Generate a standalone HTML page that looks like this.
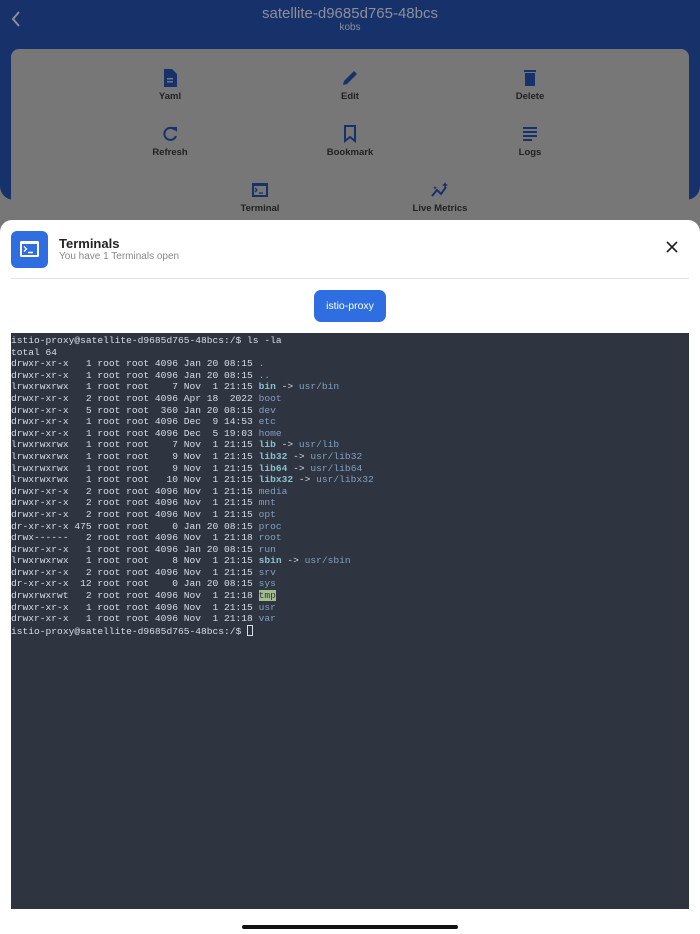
<!DOCTYPE html>
<html><head><meta charset="utf-8"><style>
*{margin:0;padding:0;box-sizing:border-box}
body{width:700px;height:934px;position:relative;overflow:hidden;background:#777;font-family:"Liberation Sans",sans-serif}
.hdr{position:absolute;left:0;top:0;width:700px;height:200px;background:#17316a;border-radius:0 0 14px 14px}
.title{position:absolute;top:5px;width:700px;text-align:center;color:#8c8f98;font-size:15px}
.sub{position:absolute;top:22px;width:700px;text-align:center;color:#8c8f98;font-size:10px}
.back{position:absolute;left:10px;top:10px}
.panel{position:absolute;left:11px;top:49px;width:678px;height:200px;background:#777;border-radius:8px}
.item{position:absolute;width:120px;text-align:center;font-size:9.5px;color:#222;font-weight:bold}
.item svg{display:block;margin:0 auto 4px}
.sheet{position:absolute;left:0;top:220px;width:700px;height:714px;background:#fff;border-radius:12px 12px 0 0}
.ticon{position:absolute;left:11px;top:11px;width:37px;height:37px;background:#2f6ee0;border-radius:6px}
.th{position:absolute;left:59px;top:16px;font-size:13px;color:#222;font-weight:bold}
.ts{position:absolute;left:59px;top:31px;font-size:10px;color:#888}
.x{position:absolute;left:666px;top:21px}
.line{position:absolute;left:11px;top:58px;width:678px;height:1px;background:#e3e3e3}
.btn{position:absolute;left:314px;top:70px;width:72px;height:32px;background:#2f6ee0;border-radius:7px;color:#fff;font-size:10.5px;text-align:center;line-height:32px}
.term{position:absolute;left:11px;top:113px;width:678px;height:576px;background:#2e3440;color:#d8dee9;font-family:"Liberation Mono",monospace;font-size:9.6px;line-height:11.6px;white-space:pre;padding-top:2px}
.d{color:#81a1c1}.l{color:#88c0d0;font-weight:bold}
.t{background:#a3be8c;color:#2e3440}
.cur{display:inline-block;width:6px;height:11px;border:1px solid #d8dee9;vertical-align:-2px}
.home{position:absolute;left:242px;top:925px;width:216px;height:4px;border-radius:2px;background:#111}
</style></head><body>
<div class="hdr">
<svg class="back" width="12" height="18" viewBox="0 0 12 18"><path d="M9 2 L3 9 L9 16" stroke="#8c8f98" stroke-width="2" fill="none"/></svg>
<div class="title">satellite-d9685d765-48bcs</div>
<div class="sub">kobs</div>
</div>
<div class="panel">
<div class="item" style="left:99px;top:20px"><svg width="14" height="18" viewBox="0 0 14 18"><path d="M1 0h8l5 5v13H1z" fill="#17316a"/><rect x="4" y="9" width="6" height="1.5" fill="#777"/><rect x="4" y="12" width="6" height="1.5" fill="#777"/></svg>Yaml</div>
<div class="item" style="left:279px;top:20px"><svg width="18" height="18" viewBox="0 0 18 18"><path d="M2 16l1-4L13 2l3 3L6 15z" fill="#17316a"/></svg>Edit</div>
<div class="item" style="left:459px;top:20px"><svg width="14" height="18" viewBox="0 0 14 18"><rect x="1" y="1" width="12" height="2" fill="#17316a"/><path d="M2 4h10v13H2z" fill="#17316a"/></svg>Delete</div>
<div class="item" style="left:99px;top:76px"><svg width="18" height="18" viewBox="0 0 18 18"><path d="M14 5A6 6 0 1 0 15 11" stroke="#17316a" stroke-width="2" fill="none"/><path d="M11 2h5v5z" fill="#17316a"/></svg>Refresh</div>
<div class="item" style="left:279px;top:76px"><svg width="14" height="18" viewBox="0 0 14 18"><path d="M2 1h10v15l-5-4-5 4z" stroke="#17316a" stroke-width="2" fill="none"/></svg>Bookmark</div>
<div class="item" style="left:459px;top:76px"><svg width="16" height="18" viewBox="0 0 16 18"><path d="M1 3h14M1 7h14M1 11h14M1 15h9" stroke="#17316a" stroke-width="2"/></svg>Logs</div>
<div class="item" style="left:189px;top:132px"><svg width="18" height="18" viewBox="0 0 18 18"><rect x="1" y="2" width="16" height="14" fill="#17316a"/><rect x="3" y="5" width="12" height="9" fill="#777"/><path d="M4 7l2 2-2 2M8 12h4" stroke="#17316a" stroke-width="1.3" fill="none"/></svg>Terminal</div>
<div class="item" style="left:369px;top:132px"><svg width="20" height="18" viewBox="0 0 20 18"><path d="M2 15l5-6 4 4 5-7" stroke="#17316a" stroke-width="2" fill="none"/><path d="M15 1l1 2 2 1-2 1-1 2-1-2-2-1 2-1z" fill="#17316a"/><path d="M5 5l.6 1.2 1.2.6-1.2.6L5 8.6l-.6-1.2-1.2-.6 1.2-.6z" fill="#17316a"/></svg>Live Metrics</div>
</div>
<div class="sheet">
<div class="ticon"><svg width="37" height="37" viewBox="0 0 37 37"><rect x="9" y="10" width="19" height="16" rx="1.5" fill="#fff"/><rect x="11" y="13" width="15" height="11" fill="#2f6ee0"/><path d="M13 15.5l2.5 2.5-2.5 2.5M17 21.5h5" stroke="#fff" stroke-width="1.4" fill="none"/></svg></div>
<div class="th">Terminals</div>
<div class="ts">You have 1 Terminals open</div>
<svg class="x" width="12" height="12" viewBox="0 0 12 12"><path d="M1 1l10 10M11 1L1 11" stroke="#222" stroke-width="1.6"/></svg>
<div class="line"></div>
<div class="btn">istio-proxy</div>
<div class="term">istio-proxy@satellite-d9685d765-48bcs:/$ ls -la
total 64
drwxr-xr-x   1 root root 4096 Jan 20 08:15 <span class="d">.</span>
drwxr-xr-x   1 root root 4096 Jan 20 08:15 <span class="d">..</span>
lrwxrwxrwx   1 root root    7 Nov  1 21:15 <span class="l">bin</span> -&gt; <span class="d">usr/bin</span>
drwxr-xr-x   2 root root 4096 Apr 18  2022 <span class="d">boot</span>
drwxr-xr-x   5 root root  360 Jan 20 08:15 <span class="d">dev</span>
drwxr-xr-x   1 root root 4096 Dec  9 14:53 <span class="d">etc</span>
drwxr-xr-x   1 root root 4096 Dec  5 19:03 <span class="d">home</span>
lrwxrwxrwx   1 root root    7 Nov  1 21:15 <span class="l">lib</span> -&gt; <span class="d">usr/lib</span>
lrwxrwxrwx   1 root root    9 Nov  1 21:15 <span class="l">lib32</span> -&gt; <span class="d">usr/lib32</span>
lrwxrwxrwx   1 root root    9 Nov  1 21:15 <span class="l">lib64</span> -&gt; <span class="d">usr/lib64</span>
lrwxrwxrwx   1 root root   10 Nov  1 21:15 <span class="l">libx32</span> -&gt; <span class="d">usr/libx32</span>
drwxr-xr-x   2 root root 4096 Nov  1 21:15 <span class="d">media</span>
drwxr-xr-x   2 root root 4096 Nov  1 21:15 <span class="d">mnt</span>
drwxr-xr-x   2 root root 4096 Nov  1 21:15 <span class="d">opt</span>
dr-xr-xr-x 475 root root    0 Jan 20 08:15 <span class="d">proc</span>
drwx------   2 root root 4096 Nov  1 21:18 <span class="d">root</span>
drwxr-xr-x   1 root root 4096 Jan 20 08:15 <span class="d">run</span>
lrwxrwxrwx   1 root root    8 Nov  1 21:15 <span class="l">sbin</span> -&gt; <span class="d">usr/sbin</span>
drwxr-xr-x   2 root root 4096 Nov  1 21:15 <span class="d">srv</span>
dr-xr-xr-x  12 root root    0 Jan 20 08:15 <span class="d">sys</span>
drwxrwxrwt   2 root root 4096 Nov  1 21:18 <span class="t">tmp</span>
drwxr-xr-x   1 root root 4096 Nov  1 21:15 <span class="d">usr</span>
drwxr-xr-x   1 root root 4096 Nov  1 21:18 <span class="d">var</span>
istio-proxy@satellite-d9685d765-48bcs:/$ <span class="cur"></span></div>
</div>
<div class="home"></div>
</body></html>
